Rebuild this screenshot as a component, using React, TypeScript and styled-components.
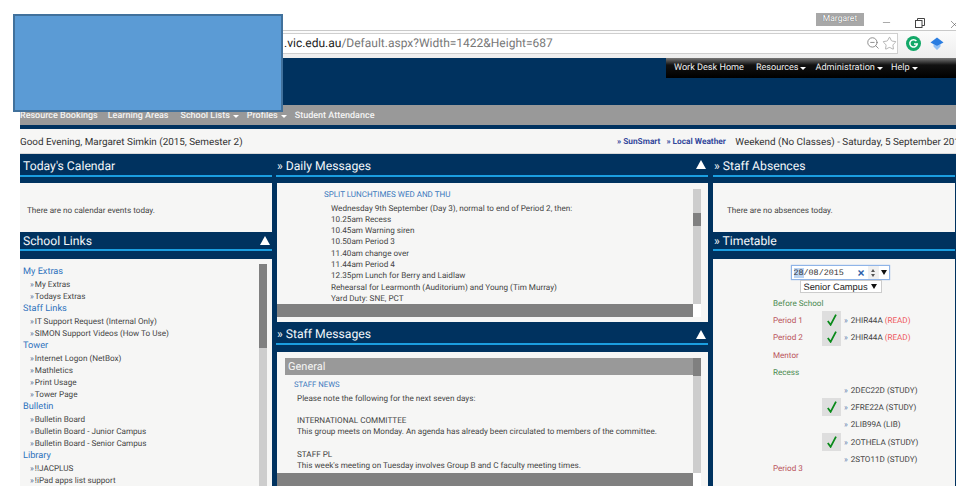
import React from 'react'
import styled, { createGlobalStyle } from 'styled-components'
import { Minus, Star, X, ZoomOut } from 'lucide-react'

const GlobalStyle = createGlobalStyle`
  html, body { margin: 0; padding: 0; background: #fff; }
  body {
    font-family: Roboto, "Open Sans", sans-serif;
    overflow: hidden;
    text-rendering: geometricPrecision;
  }
  * { box-sizing: border-box; }
`

const linkGroups = [
  { title: 'My Extras', items: ['My Extras', 'Todays Extras'] },
  { title: 'Staff Links', items: ['IT Support Request (Internal Only)', 'SIMON Support Videos (How To Use)'] },
  { title: 'Tower', items: ['Internet Logon (NetBox)', 'Mathletics', 'Print Usage', 'Tower Page'] },
  { title: 'Bulletin', items: ['Bulletin Board', 'Bulletin Board - Junior Campus', 'Bulletin Board - Senior Campus'] },
  { title: 'Library', items: ['!!JACPLUS', '!iPad apps list support'] },
]

const dailyLines = [
  'Wednesday 9th September (Day 3), normal to end of Period 2, then:',
  '10.25am Recess',
  '10.45am Warning siren',
  '10.50am Period 3',
  '11.40am change over',
  '11.44am Period 4',
  '12.35pm Lunch for Berry and Laidlaw',
  'Rehearsal for Learmonth (Auditorium) and Young (Tim Murray)',
  'Yard Duty: SNE, PCT',
]

const period3 = [
  { code: '2DEC22D', note: '(STUDY)', done: false },
  { code: '2FRE22A', note: '(STUDY)', done: true },
  { code: '2LIB99A', note: '(LIB)', done: false },
  { code: '2OTHELA', note: '(STUDY)', done: true },
  { code: '2STO11D', note: '(STUDY)', done: false },
  { code: '2STU44A', note: '(STUDY)', done: false },
  { code: '', note: '', done: false },
  { code: '', note: '', done: false },
  { code: '', note: '', done: false },
  { code: '', note: '', done: false },
]

const GreenCheck = () => (
  <svg width="10" height="12" viewBox="0 0 10 12" fill="none" stroke="#0a8a1a" strokeWidth="1.8">
    <path d="M0.8 7L3.6 10.8L9 0.6" />
  </svg>
)

const App = () => {
  return (
    <S.Page>
      <GlobalStyle />
      <S.Cover />

      <S.TitleRow>
        <S.UserBadge>Margaret</S.UserBadge>
        <S.WinButton><Minus size={11} strokeWidth={1} /></S.WinButton>
        <S.WinButton>
          <svg width="10" height="10" viewBox="0 0 10 10" fill="none" stroke="#444" strokeWidth="1">
            <rect x="0.5" y="2.5" width="6.5" height="7" fill="#fff" />
            <path d="M2.5 2.5V0.5H9.5V7.5H7" />
          </svg>
        </S.WinButton>
        <S.CloseButton><X size={13} strokeWidth={1} /></S.CloseButton>
      </S.TitleRow>

      <S.Toolbar>
        <S.UrlBar>
          <S.UrlHost>.vic.edu.au</S.UrlHost>
          <S.UrlPath>/Default.aspx?Width=1422&amp;Height=687</S.UrlPath>
          <S.UrlIcons>
            <ZoomOut size={14} strokeWidth={1.4} color="#777" />
            <Star size={15} strokeWidth={1} color="#888" />
          </S.UrlIcons>
        </S.UrlBar>
        <S.ExtensionIcon width="15" height="15" viewBox="0 0 15 15" $left={8} $right={9}>
          <circle cx="7.5" cy="7.5" r="7.5" fill="#12a868" />
          <path d="M10.4 5A3.7 3.7 0 1 0 11.2 8H8" fill="none" stroke="#fff" strokeWidth="1.5" />
        </S.ExtensionIcon>
        <S.ExtensionIcon width="14" height="13" viewBox="0 0 14 13" $left={0} $right={0}>
          <path d="M3.5 7L7 9L10.5 7V9.5L7 13L3.5 9.5Z" fill="#8fc0f7" />
          <path d="M7 0.5L13.5 5.5L7 9L0.5 5.5Z" fill="#2a7de1" />
        </S.ExtensionIcon>
      </S.Toolbar>

      <S.Banner>
        <S.TopMenu>
          <S.TopItem $after={12}>Work Desk Home</S.TopItem>
          <S.TopItem $after={9}>Resources <S.Caret /></S.TopItem>
          <S.TopItem $after={8}>Administration <S.Caret /></S.TopItem>
          <S.TopItem $after={0}>Help <S.Caret /></S.TopItem>
        </S.TopMenu>
      </S.Banner>

      <S.NavBar>
        <S.NavItem $after={10}>Resource Bookings</S.NavItem>
        <S.NavItem $after={12}>Learning Areas</S.NavItem>
        <S.NavItem $after={8}>School Lists <S.Caret /></S.NavItem>
        <S.NavItem $after={8}>Profiles <S.Caret /></S.NavItem>
        <S.NavItem $after={0}>Student Attendance</S.NavItem>
      </S.NavBar>

      <S.GreetBar>
        <S.Greeting>Good Evening, Margaret Simkin (2015, Semester 2)</S.Greeting>
        <S.QuickLink>» SunSmart</S.QuickLink>
        <S.QuickLink>» Local Weather</S.QuickLink>
        <S.DayInfo>Weekend (No Classes) - Saturday, 5 September 2015</S.DayInfo>
      </S.GreetBar>

      <S.Columns>
        <S.LeftColumn>
          <S.PanelHead $height={29} $stripe={6}>
            <S.PanelTitle $inset={3} $top={4}>Today's Calendar</S.PanelTitle>
          </S.PanelHead>
          <S.NoticeBody $inset={7}>There are no calendar events today.</S.NoticeBody>
          <S.PanelHead $height={27} $stripe={8}>
            <S.PanelTitle $inset={3} $top={1}>School Links</S.PanelTitle>
            <S.Collapse $top={4} />
          </S.PanelHead>
          <S.LinksBody>
            <S.LinksList>
              {linkGroups.map((group) => (
                <React.Fragment key={group.title}>
                  <S.GroupTitle>{group.title}</S.GroupTitle>
                  {group.items.map((item) => (
                    <S.LinkItem key={item}><S.Chevron>»</S.Chevron>{item}</S.LinkItem>
                  ))}
                </React.Fragment>
              ))}
            </S.LinksList>
            <S.VTrack $thumbTop={0} $thumbHeight={84} />
          </S.LinksBody>
        </S.LeftColumn>

        <S.MiddleColumn>
          <S.PanelHead $height={29} $stripe={6}>
            <S.PanelTitle $inset={1} $top={4}>» Daily Messages</S.PanelTitle>
            <S.Collapse $top={6} />
          </S.PanelHead>
          <S.ScrollPanel $height={139} $bottom={5}>
            <S.ScrollContent $pad="0 0 0 47px">
              <S.MessageTitle $size={8}>SPLIT LUNCHTIMES WED AND THU</S.MessageTitle>
              <S.MessageLines $indent={7}>
                {dailyLines.map((line) => <div key={line}>{line}</div>)}
              </S.MessageLines>
            </S.ScrollContent>
            <S.VTrack $thumbTop={24} $thumbHeight={13} />
            <S.HBar />
            <S.Corner />
          </S.ScrollPanel>
          <S.PanelHead $height={30} $stripe={7}>
            <S.PanelTitle $inset={1} $top={4}>» Staff Messages</S.PanelTitle>
            <S.Collapse $top={8} />
          </S.PanelHead>
          <S.ScrollPanel $height={134} $bottom={0}>
            <S.ScrollContent $pad="0 0 0 8px">
              <S.GeneralBar>General</S.GeneralBar>
              <S.MessageBlock>
                <S.MessageTitle $size={7.7}>STAFF NEWS</S.MessageTitle>
                <S.MessageLines $indent={3}>
                  <div>Please note the following for the next seven days:</div>
                  <S.Spacer />
                  <div>INTERNATIONAL COMMITTEE</div>
                  <div>This group meets on Monday. An agenda has already been circulated to members of the committee.</div>
                  <S.Spacer />
                  <div>STAFF PL</div>
                  <div>This week's meeting on Tuesday involves Group B and C faculty meeting times.</div>
                </S.MessageLines>
              </S.MessageBlock>
            </S.ScrollContent>
            <S.VTrack $thumbTop={0} $thumbHeight={18} />
            <S.HBar />
            <S.Corner />
          </S.ScrollPanel>
        </S.MiddleColumn>

        <S.RightColumn>
          <S.PanelHead $height={29} $stripe={6}>
            <S.PanelTitle $inset={1} $top={4}>» Staff Absences</S.PanelTitle>
          </S.PanelHead>
          <S.NoticeBody $inset={14}>There are no absences today.</S.NoticeBody>
          <S.PanelHead $height={27} $stripe={8}>
            <S.PanelTitle $inset={1} $top={1}>» Timetable</S.PanelTitle>
          </S.PanelHead>
          <S.TimetableBody>
            <S.DatePicker>
              <S.DateText><S.DateSelected>28</S.DateSelected>/08/2015</S.DateText>
              <S.DateClear>×</S.DateClear>
              <S.DateSpin>
                <S.SpinUp />
                <S.SpinDown />
              </S.DateSpin>
              <S.DateDrop />
            </S.DatePicker>
            <S.CampusSelect>
              Senior Campus
              <S.DateDrop />
            </S.CampusSelect>
            <S.Periods>
              <S.SlotRow><S.BreakLabel>Before School</S.BreakLabel></S.SlotRow>
              <S.SlotRow>
                <S.PeriodLabel>Period 1</S.PeriodLabel>
                <S.Tick><GreenCheck /></S.Tick>
                <S.ClassLink><S.ClassArrow>»</S.ClassArrow>2HIR44A <S.ReadNote>(READ)</S.ReadNote></S.ClassLink>
              </S.SlotRow>
              <S.SlotRow>
                <S.PeriodLabel>Period 2</S.PeriodLabel>
                <S.Tick><GreenCheck /></S.Tick>
                <S.ClassLink><S.ClassArrow>»</S.ClassArrow>2HIR44A <S.ReadNote>(READ)</S.ReadNote></S.ClassLink>
              </S.SlotRow>
              <S.SlotRow><S.PeriodLabel>Mentor</S.PeriodLabel></S.SlotRow>
              <S.SlotRow><S.BreakLabel>Recess</S.BreakLabel></S.SlotRow>
              <S.PeriodGroup>
                <S.PeriodLabel>Period 3</S.PeriodLabel>
                <div>
                  {period3.map((slot, i) => (
                    <S.GroupRow key={i}>
                      {slot.done ? <S.Tick><GreenCheck /></S.Tick> : <S.NoTick />}
                      {slot.code && <S.ClassLink><S.ClassArrow>»</S.ClassArrow>{slot.code} {slot.note}</S.ClassLink>}
                    </S.GroupRow>
                  ))}
                </div>
              </S.PeriodGroup>
            </S.Periods>
          </S.TimetableBody>
        </S.RightColumn>
      </S.Columns>
    </S.Page>
  )
}

const S = {
  Page: styled.div`
    position: relative;
    display: flex;
    flex-direction: column;
    width: 964px;
    height: 494px;
    padding: 0 8px 8px 20px;
    overflow: hidden;
    background: #fff;
  `,
  Cover: styled.div`
    position: absolute;
    left: 13px;
    top: 14px;
    width: 270px;
    height: 98px;
    background: #5b9bd5;
    border: 2px solid #41719c;
    z-index: 5;
  `,
  TitleRow: styled.div`
    display: flex;
    align-items: flex-start;
    justify-content: flex-end;
    height: 31px;
    padding-top: 13px;
    border-bottom: 1px solid #c9c9c9;
  `,
  UserBadge: styled.div`
    width: 48px;
    height: 13px;
    margin-right: 5px;
    background: #a8a8a8;
    color: #fff;
    font-size: 8.5px;
    line-height: 12px;
    text-align: center;
    text-shadow: 0 0 1px #555;
  `,
  WinButton: styled.div`
    display: flex;
    align-items: center;
    justify-content: center;
    width: 34px;
    height: 15px;
    padding-top: 4px;
    color: #444;
  `,
  CloseButton: styled.div`
    width: 19px;
    height: 15px;
    padding: 3px 0 0 11px;
    overflow: hidden;
    color: #444;
  `,
  Toolbar: styled.div`
    display: flex;
    align-items: center;
    height: 27px;
    padding-bottom: 3px;
    background: linear-gradient(#fbfbfb, #eeeeee);
  `,
  UrlBar: styled.div`
    display: flex;
    align-items: center;
    flex: none;
    width: 878px;
    height: 21px;
    padding-left: 263px;
    background: #fff;
    border: 1px solid #cfcfcf;
    font-size: 12px;
    white-space: nowrap;
  `,
  UrlHost: styled.span`
    color: #222;
  `,
  UrlPath: styled.span`
    color: #777;
  `,
  UrlIcons: styled.div`
    display: flex;
    align-items: center;
    gap: 2px;
    margin-left: auto;
  `,
  ExtensionIcon: styled.svg<{ $left: number; $right: number }>`
    flex: none;
    margin: 0 ${(p) => p.$right}px 0 ${(p) => p.$left}px;
  `,
  Banner: styled.div`
    display: flex;
    justify-content: flex-end;
    height: 47px;
    background: #00325f;
  `,
  TopMenu: styled.div`
    display: flex;
    align-items: center;
    width: 290px;
    height: 20px;
    padding-left: 8px;
    background: linear-gradient(#777 0, #111 7px, #000 100%);
  `,
  TopItem: styled.div<{ $after: number }>`
    display: flex;
    align-items: center;
    gap: 2px;
    margin-right: ${(p) => p.$after}px;
    color: #eee;
    font-size: 9.1px;
    white-space: nowrap;
  `,
  Caret: styled.span`
    display: inline-block;
    width: 0;
    height: 0;
    border-left: 3px solid transparent;
    border-right: 3px solid transparent;
    border-top: 3px solid #fff;
  `,
  NavBar: styled.div`
    display: flex;
    align-items: center;
    height: 24px;
    padding-top: 2px;
    background: #999;
    border-bottom: 4px solid #00325f;
  `,
  NavItem: styled.div<{ $after: number }>`
    display: flex;
    align-items: center;
    gap: 3px;
    margin-right: ${(p) => p.$after}px;
    color: #f4f4f4;
    font-size: 9px;
    font-weight: 500;
    white-space: nowrap;
  `,
  GreetBar: styled.div`
    display: flex;
    align-items: center;
    height: 25px;
    padding-top: 2px;
    background: #f6f6f5;
    border-bottom: 1px solid #d8d8d8;
    white-space: nowrap;
    overflow: hidden;
  `,
  Greeting: styled.div`
    flex: none;
    width: 597px;
    color: #333;
    font-size: 9.9px;
  `,
  QuickLink: styled.div`
    flex: none;
    margin-right: 6px;
    color: #34499c;
    font-size: 8.3px;
    font-weight: 700;
  `,
  DayInfo: styled.div`
    flex: none;
    margin-left: 3.5px;
    color: #333;
    font-size: 9.9px;
  `,
  Columns: styled.div`
    display: grid;
    grid-template-columns: 252px 432px 243px;
    column-gap: 4px;
    flex: 1;
    min-height: 0;
    background: #00325f;
  `,
  LeftColumn: styled.div`
    display: flex;
    flex-direction: column;
    min-width: 0;
  `,
  MiddleColumn: styled.div`
    display: flex;
    flex-direction: column;
    min-width: 0;
  `,
  RightColumn: styled.div`
    display: flex;
    flex-direction: column;
    min-width: 0;
    margin-left: 1px;
  `,
  PanelHead: styled.div<{ $height: number; $stripe: number }>`
    position: relative;
    flex: none;
    height: ${(p) => p.$height}px;
    &::after {
      content: '';
      position: absolute;
      left: 0;
      right: 0;
      bottom: ${(p) => p.$stripe}px;
      height: 2px;
      background: #1b9ee0;
    }
  `,
  PanelTitle: styled.div<{ $inset: number; $top: number }>`
    padding: ${(p) => p.$top}px 0 0 ${(p) => p.$inset}px;
    color: #f2f6fa;
    font-size: 12.2px;
    line-height: 17px;
  `,
  Collapse: styled.span<{ $top: number }>`
    position: absolute;
    right: 2px;
    top: ${(p) => p.$top}px;
    width: 0;
    height: 0;
    border-left: 5.5px solid transparent;
    border-right: 5.5px solid transparent;
    border-bottom: 9px solid #fff;
  `,
  NoticeBody: styled.div<{ $inset: number }>`
    flex: none;
    display: flex;
    align-items: center;
    height: 49px;
    padding: 4px 0 0 ${(p) => p.$inset}px;
    background: #f6f6f5;
    color: #444;
    font-size: 8.15px;
  `,
  LinksBody: styled.div`
    flex: 1;
    display: flex;
    justify-content: space-between;
    min-height: 0;
    padding: 5px 5px 0 3px;
    background: #f6f6f5;
    overflow: hidden;
  `,
  LinksList: styled.div`
    padding-top: 1px;
  `,
  GroupTitle: styled.div`
    height: 13px;
    color: #2f73bd;
    font-size: 9.2px;
    line-height: 13px;
  `,
  LinkItem: styled.div`
    height: 12px;
    padding-left: 7px;
    color: #444;
    font-size: 8.15px;
    line-height: 12px;
    white-space: nowrap;
  `,
  Chevron: styled.span`
    margin-right: 1px;
    color: #4a6a94;
  `,
  VTrack: styled.div<{ $thumbTop: number; $thumbHeight: number }>`
    position: relative;
    flex: none;
    width: 8px;
    background: #cdcdcd;
    &::before {
      content: '';
      position: absolute;
      left: 0;
      right: 0;
      top: ${(p) => p.$thumbTop}px;
      height: ${(p) => p.$thumbHeight}px;
      background: #808080;
    }
  `,
  ScrollPanel: styled.div<{ $height: number; $bottom: number }>`
    flex: none;
    display: grid;
    grid-template-columns: 416px 8px;
    grid-template-rows: minmax(0, 1fr) 13px;
    height: ${(p) => p.$height}px;
    margin-left: 1px;
    padding: 6px 0 ${(p) => p.$bottom}px 0;
    background: #f6f6f5;
    overflow: hidden;
  `,
  ScrollContent: styled.div<{ $pad: string }>`
    min-height: 0;
    padding: ${(p) => p.$pad};
    overflow: hidden;
  `,
  HBar: styled.div`
    background: #808080;
  `,
  Corner: styled.div`
    background: #fff;
  `,
  MessageTitle: styled.div<{ $size: number }>`
    height: 13.5px;
    color: #3a78bd;
    font-size: ${(p) => p.$size}px;
    line-height: 11px;
    white-space: nowrap;
  `,
  MessageLines: styled.div<{ $indent: number }>`
    padding-left: ${(p) => p.$indent}px;
    color: #444;
    font-size: 8.15px;
    line-height: 11.3px;
    white-space: nowrap;
  `,
  Spacer: styled.div`
    height: 11.3px;
  `,
  GeneralBar: styled.div`
    height: 17px;
    padding-left: 3px;
    background: #999;
    color: #f4f4f4;
    font-size: 11px;
    line-height: 17px;
  `,
  MessageBlock: styled.div`
    padding: 4px 0 0 9px;
  `,
  TimetableBody: styled.div`
    flex: 1;
    display: flex;
    flex-direction: column;
    align-items: center;
    min-height: 0;
    padding-top: 6px;
    background: #f6f6f5;
    overflow: hidden;
  `,
  DatePicker: styled.div`
    display: flex;
    align-items: center;
    flex: none;
    width: 99px;
    height: 15px;
    margin-left: 12px;
    padding-left: 2px;
    background: #fff;
    border: 1px solid #8fb4e8;
    box-shadow: 0 0 1px #8fb4e8;
  `,
  DateText: styled.div`
    flex: none;
    width: 64px;
    color: #333;
    font-family: "Liberation Mono", monospace;
    font-size: 8.4px;
    line-height: 12px;
  `,
  DateSelected: styled.span`
    background: #bcd4f2;
  `,
  DateClear: styled.div`
    width: 8px;
    color: #2c5ea8;
    font-family: "Liberation Sans", sans-serif;
    font-size: 12px;
    font-weight: 700;
    line-height: 12px;
  `,
  DateSpin: styled.div`
    display: flex;
    flex-direction: column;
    align-items: center;
    justify-content: center;
    gap: 2px;
    width: 11px;
    height: 13px;
    margin: 0 2px;
    background: #f0f0f0;
  `,
  SpinUp: styled.span`
    border-left: 2.5px solid transparent;
    border-right: 2.5px solid transparent;
    border-bottom: 3px solid #555;
  `,
  SpinDown: styled.span`
    border-left: 2.5px solid transparent;
    border-right: 2.5px solid transparent;
    border-top: 3px solid #555;
  `,
  DateDrop: styled.span`
    margin-left: auto;
    margin-right: 2px;
    border-left: 3px solid transparent;
    border-right: 3px solid transparent;
    border-top: 5px solid #111;
  `,
  CampusSelect: styled.div`
    display: flex;
    align-items: center;
    flex: none;
    width: 82px;
    height: 13px;
    margin-left: 13px;
    padding: 0 2px 0 3px;
    background: #fff;
    border: 1px solid #ccc;
    color: #222;
    font-family: "Liberation Sans", sans-serif;
    font-size: 9.3px;
    white-space: nowrap;
  `,
  Periods: styled.div`
    flex: none;
    align-self: stretch;
    height: 179px;
    margin-top: 1px;
    padding-left: 60px;
    overflow: hidden;
  `,
  SlotRow: styled.div`
    display: grid;
    grid-template-columns: 49px 19px 1fr;
    align-items: center;
    height: 17.4px;
  `,
  PeriodGroup: styled.div`
    display: grid;
    grid-template-columns: 49px 1fr;
    align-items: center;
  `,
  GroupRow: styled.div`
    display: grid;
    grid-template-columns: 19px 1fr;
    align-items: center;
    height: 17.4px;
  `,
  PeriodLabel: styled.div`
    color: #b9535a;
    font-size: 8.1px;
    white-space: nowrap;
  `,
  BreakLabel: styled.div`
    color: #4b8a50;
    font-size: 8.1px;
    white-space: nowrap;
  `,
  Tick: styled.div`
    display: flex;
    align-items: center;
    justify-content: center;
    height: 100%;
    background: #dedede;
  `,
  NoTick: styled.div``,
  ClassLink: styled.div`
    padding-left: 3px;
    color: #444;
    font-size: 8.1px;
    white-space: nowrap;
  `,
  ClassArrow: styled.span`
    margin-right: 3px;
    color: #5a7fae;
  `,
  ReadNote: styled.span`
    color: #ee5a5e;
  `,
}

export default App
